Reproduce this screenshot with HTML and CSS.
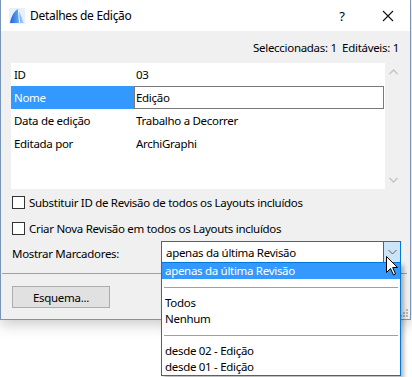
FILE: index.html
```html
<!DOCTYPE html>
<html lang="pt">
<head>
<meta charset="utf-8">
<title>Detalhes de Edição</title>
<link rel="stylesheet" href="styles.css">
</head>
<body>
<div class="window">
  <div class="titlebar">
    <svg class="app-icon" width="16" height="16" viewBox="0 0 16 16">
      <defs>
        <linearGradient id="ag" x1="0" y1="0" x2="1" y2="0">
          <stop offset="0" stop-color="#1d63d6"/>
          <stop offset="0.55" stop-color="#5aa0f0"/>
          <stop offset="1" stop-color="#b9dcfb"/>
        </linearGradient>
      </defs>
      <rect x="0" y="0" width="16" height="16" fill="#e6f1fc"/>
      <path d="M1 15 C2 9 5 3 9 1 L15 15 Z" fill="url(#ag)"/>
      <path d="M9.5 2 L10.5 15" stroke="#ffffff" stroke-width="1"/>
    </svg>
    <span class="title">Detalhes de Edição</span>
    <span class="tb-btn help">?</span>
    <span class="tb-btn close">
      <svg width="12" height="12" viewBox="0 0 12 12"><path d="M1 1 L11 11 M11 1 L1 11" stroke="#111" stroke-width="1.1"/></svg>
    </span>
  </div>

  <div class="body">
    <div class="counts">Seleccionadas: 1&nbsp;&nbsp;Editáveis: 1</div>

    <div class="list-area">
      <div class="grid">
        <div class="row"><span class="label">ID</span><span class="value">03</span></div>
        <div class="row selected"><span class="label">Nome</span><span class="value edit">Edição</span></div>
        <div class="row"><span class="label">Data de edição</span><span class="value">Trabalho a Decorrer</span></div>
        <div class="row"><span class="label">Editada por</span><span class="value">ArchiGraphi</span></div>
      </div>
      <div class="scrollbar">
        <svg width="9" height="6" viewBox="0 0 9 6"><path d="M0.5 5 L4.5 1 L8.5 5" fill="none" stroke="#c4c4c4" stroke-width="1.4"/></svg>
        <svg width="9" height="6" viewBox="0 0 9 6"><path d="M0.5 1 L4.5 5 L8.5 1" fill="none" stroke="#c4c4c4" stroke-width="1.4"/></svg>
      </div>
    </div>

    <div class="check"><span class="box"></span><span>Substituir ID de Revisão de todos os Layouts incluídos</span></div>
    <div class="check"><span class="box"></span><span>Criar Nova Revisão em todos os Layouts incluídos</span></div>

    <div class="markers">
      <span class="markers-label">Mostrar Marcadores:</span>
      <div class="combo">
        <span class="combo-text">apenas da última Revisão</span>
        <span class="combo-btn">
          <svg width="9" height="6" viewBox="0 0 9 6"><path d="M0.5 1 L4.5 5 L8.5 1" fill="none" stroke="#606060" stroke-width="1"/></svg>
        </span>
      </div>
    </div>
  </div>

  <div class="separator"></div>

  <div class="footer">
    <button class="btn">Esquema...</button>
  </div>

  <div class="grip">
    <span></span><span></span><span></span><span></span><span></span><span></span>
  </div>
</div>

<div class="dropdown">
  <div class="item active">apenas da última Revisão</div>
  <div class="sep"></div>
  <div class="item">Todos</div>
  <div class="item">Nenhum</div>
  <div class="sep"></div>
  <div class="item">desde 02 - Edição</div>
  <div class="item">desde 01 - Edição</div>
</div>

<svg class="cursor" width="13" height="20" viewBox="0 0 13 20">
  <path d="M0.5 0.5 L0.5 16.5 L4.5 12.5 L7.5 19 L9.5 18 L6.7 11.5 L11.5 11.5 Z" fill="#fff" stroke="#000" stroke-width="1" stroke-linejoin="miter"/>
</svg>
</body>
</html>
```

FILE: styles.css
```css
* { box-sizing: border-box; }

html, body {
  margin: 0;
  padding: 0;
  background: #ffffff;
}

body {
  font-family: "Segoe UI", "Noto Sans", "Open Sans", sans-serif;
  font-size: 11.5px;
  letter-spacing: -0.3px;
  color: #000;
  position: relative;
  width: 412px;
  height: 377px;
  overflow: hidden;
}

.window {
  position: relative;
  width: 411px;
  background: #f0f0f0;
  border: 1px solid #7895b8;
  border-top: none;
  box-shadow: 0 4px 14px rgba(0, 0, 0, 0.22);
}

.titlebar {
  height: 31px;
  background: #ffffff;
  display: flex;
  align-items: center;
  padding-left: 8px;
}

.app-icon {
  display: block;
  margin-top: 1px;
}

.title {
  margin-left: 5px;
  font-size: 12px;
  flex: 1;
}

.tb-btn {
  display: flex;
  align-items: center;
  justify-content: center;
  height: 31px;
}

.help {
  width: 14px;
  font-size: 13px;
  margin-right: 32px;
}

.close {
  width: 14px;
  margin-right: 15px;
}

.body {
  padding: 0 9px 0 10px;
}

.counts {
  margin-top: 9px;
  height: 16px;
  line-height: 16px;
  text-align: right;
  padding-right: 2px;
}

.list-area {
  margin-top: 7px;
  display: flex;
  height: 126px;
}

.grid {
  width: 374px;
  background: #ffffff;
}

.row {
  display: flex;
  height: 23px;
  align-items: stretch;
}

.label {
  width: 123px;
  padding-left: 3px;
  display: flex;
  align-items: center;
}

.value {
  flex: 1;
  padding-left: 2px;
  display: flex;
  align-items: center;
}

.row.selected .label {
  background: #3399ff;
  color: #ffffff;
}

.value.edit {
  border: 1px solid #7a7a7a;
  margin-right: 1px;
  padding-left: 1px;
}

.scrollbar {
  width: 16px;
  display: flex;
  flex-direction: column;
  justify-content: space-between;
  align-items: center;
  padding: 6px 0 6px 0;
}

.scrollbar svg { display: block; margin-left: 1px; }

.check {
  height: 26px;
  display: flex;
  align-items: center;
  padding-left: 1px;
}

.box {
  width: 13px;
  height: 13px;
  border: 1px solid #333333;
  background: #ffffff;
  margin-right: 4px;
}

.markers {
  display: flex;
  align-items: center;
  height: 22px;
}

.markers-label {
  padding-left: 1px;
  flex: 1;
  padding-top: 2px;
}

.combo {
  width: 240px;
  height: 22px;
  border: 1px solid #0078d7;
  background: #ffffff;
  display: flex;
  align-items: stretch;
}

.combo-text {
  flex: 1;
  padding-left: 4px;
  display: flex;
  align-items: center;
}

.combo-btn {
  width: 17px;
  background: #cce4f7;
  border-left: 1px solid #0078d7;
  display: flex;
  align-items: center;
  justify-content: center;
}

.separator {
  margin: 10px 3px 0 1px;
  height: 1px;
  background: #a0a0a0;
}

.footer {
  padding: 12px 0 11px 11px;
}

.btn {
  display: block;
  width: 98px;
  height: 22px;
  border: 1px solid #adadad;
  background: #e1e1e1;
  font-family: inherit;
  font-size: 11.5px;
  letter-spacing: -0.3px;
  color: #000;
  padding: 0;
}

.grip {
  position: absolute;
  right: 2px;
  bottom: 2px;
  width: 7px;
  height: 7px;
}

.grip span {
  position: absolute;
  width: 2px;
  height: 2px;
  background: #b8b8b8;
}
.grip span:nth-child(1) { right: 0; bottom: 0; }
.grip span:nth-child(2) { right: 3px; bottom: 0; }
.grip span:nth-child(3) { right: 6px; bottom: 0; }
.grip span:nth-child(4) { right: 0; bottom: 3px; }
.grip span:nth-child(5) { right: 3px; bottom: 3px; }
.grip span:nth-child(6) { right: 0; bottom: 6px; }

.dropdown {
  position: absolute;
  left: 161px;
  top: 262px;
  width: 240px;
  background: #ffffff;
  border: 1px solid #0078d7;
  box-shadow: 3px 3px 4px rgba(0, 0, 0, 0.28);
  padding: 0;
}

.item {
  height: 16px;
  line-height: 16px;
  padding-left: 3px;
}

.item.active {
  background: #3399ff;
  color: #ffffff;
}

.sep {
  height: 16px;
  display: flex;
  align-items: center;
  padding: 0 2px 0 2px;
}

.sep::before {
  content: "";
  display: block;
  width: 100%;
  height: 1px;
  background: #a0a0a0;
}

.cursor {
  position: absolute;
  left: 386px;
  top: 256px;
}
```
